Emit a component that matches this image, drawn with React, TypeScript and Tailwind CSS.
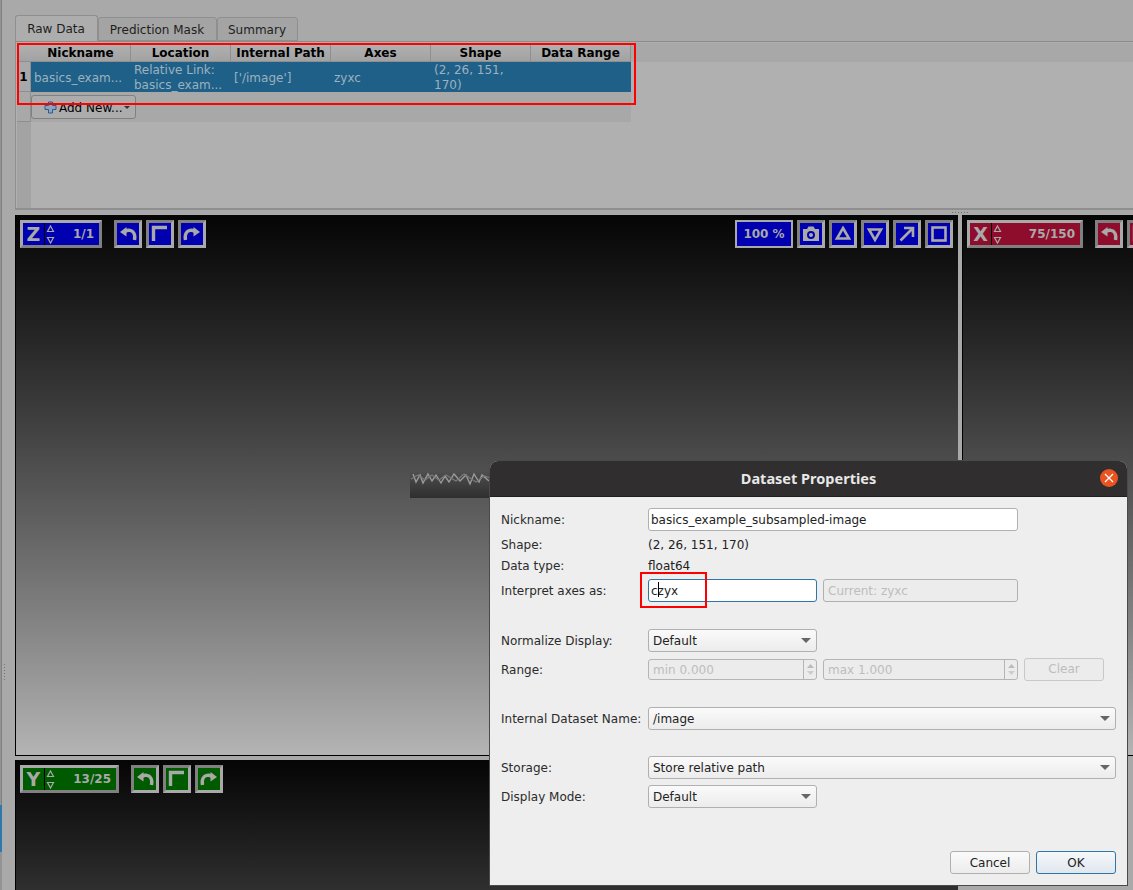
import React from "react";

const FONT = { fontFamily: '"DejaVu Sans", sans-serif' };

const columns = ["Nickname", "Location", "Internal Path", "Axes", "Shape", "Data Range"];

const Icon = ({ type }: { type: string }) => {
  const common = { fill: "none", stroke: "#a9a9a9", strokeWidth: 2.6 };
  return (
    <svg width="22" height="22" viewBox="0 0 22 22">
      {type === "undo" && (
        <>
          <path d="M8 8.5 C11 6.5 15 7 16.8 10 C18 12 18 14.5 17.5 17" {...common} strokeWidth={3.4} />
          <path d="M9.5 4 V13.5 L3 9 Z" fill="#a9a9a9" />
        </>
      )}
      {type === "redo" && (
        <>
          <path d="M14 8.5 C11 6.5 7 7 5.2 10 C4 12 4 14.5 4.5 17" {...common} strokeWidth={3.4} />
          <path d="M12.5 4 V13.5 L19 9 Z" fill="#a9a9a9" />
        </>
      )}
      {type === "corner" && <path d="M4.5 18 V4.5 H18" {...common} strokeWidth={3.4} />}
      {type === "camera" && (
        <>
          <path
            fillRule="evenodd"
            d="M3 6 H7 L8.5 3.5 H13.5 L15 6 H19 V18 H3 Z M11 8 A4 4 0 1 0 11 16 A4 4 0 1 0 11 8 Z"
            fill="#a9a9a9"
          />
          <circle cx="11" cy="12" r="2" fill="#a9a9a9" />
        </>
      )}
      {type === "up" && <path d="M11 5 L17 15.5 H5 Z" {...common} />}
      {type === "down" && <path d="M5 6.5 H17 L11 17 Z" {...common} />}
      {type === "diag" && (
        <>
          <path d="M4.5 17.5 L16 6" {...common} />
          <path d="M8 5 H17 V14" {...common} />
        </>
      )}
      {type === "square" && <rect x="4.5" y="4.5" width="13" height="13" {...common} />}
    </svg>
  );
};

const ToolButton = ({ type, bg }: { type: string; bg: string }) => (
  <div
    className={`w-[28px] h-[28px] border-[3px] border-t-[#808080] border-l-[#808080] border-r-[#a9a9a9] border-b-[#a9a9a9] ${bg}`}
  >
    <Icon type={type} />
  </div>
);

const Stepper = () => (
  <svg width="9" height="21" viewBox="0 0 9 21" className="shrink-0">
    <path d="M4.5 2 L7.5 7.5 H1.5 Z" fill="none" stroke="#a9a9a9" strokeWidth="1.2" />
    <path d="M1.5 13.5 H7.5 L4.5 19 Z" fill="none" stroke="#a9a9a9" strokeWidth="1.2" />
  </svg>
);

const AxisBox = ({ axis, value, width, bg }: { axis: string; value: string; width: string; bg: string }) => (
  <div
    className={`h-[28px] flex items-center border-[3px] border-t-[#a9a9a9] border-l-[#a9a9a9] border-r-[#808080] border-b-[#808080] ${width} ${bg}`}
  >
    <span className="w-[21px] h-full text-center text-[19px] leading-[22px] font-bold text-[#a9a9a9]">{axis}</span>
    <span className="w-px h-full bg-black" />
    <span className="ml-[1px]">
      <Stepper />
    </span>
    <span className="flex-1 text-right pr-[5px] text-[12px] font-bold text-[#a9a9a9]">{value}</span>
  </div>
);

const BlackBlue = "bg-[#0000b0]";

const Caret = () => (
  <svg width="10" height="5" viewBox="0 0 10 5">
    <path d="M0 0 H10 L5 5 Z" fill="#666" />
  </svg>
);

const Select = ({ label, width }: { label: string; width: string }) => (
  <div
    className={`h-[23px] flex items-center justify-between pl-[4px] pr-[5px] rounded-[3px] border border-[#b0b0b0] bg-gradient-to-b from-[#fafafa] to-[#ececec] text-[12px] text-[#222] ${width}`}
  >
    <span>{label}</span>
    <Caret />
  </div>
);

const SpinBox = ({ text, width }: { text: string; width: string }) => (
  <div className={`h-[21px] flex items-center rounded-[3px] border border-[#b5b5b5] bg-[#ececec] ${width}`}>
    <span className="flex-1 pl-[4px] text-[12px] text-[#bdbdbd]">{text}</span>
    <div className="w-[13px] h-full border-l border-[#b5b5b5] flex flex-col items-center justify-center gap-[3px]">
      <svg width="7" height="4" viewBox="0 0 7 4">
        <path d="M3.5 0 L7 4 H0 Z" fill="#bbb" />
      </svg>
      <svg width="7" height="4" viewBox="0 0 7 4">
        <path d="M0 0 H7 L3.5 4 Z" fill="#ccc" />
      </svg>
    </div>
  </div>
);

const FieldLabel = ({ children }: { children: React.ReactNode }) => (
  <span className="w-[147px] shrink-0 text-[12px] text-[#2b2b2b] whitespace-nowrap">{children}</span>
);

const Dialog = () => (
  <div className="absolute left-[490px] top-[461px] w-[637px] h-[424px] rounded-t-[8px] overflow-hidden bg-[#eeeeee] flex flex-col shadow-[0_0_0_1px_#4a4a4a]">
    <div className="h-[36px] shrink-0 relative bg-[#302e2e] flex items-center justify-center border-b border-[#1f1f1f]">
      <span className="text-[14.5px] font-bold text-[#e8e8e8]" style={{ fontFamily: '"Noto Sans", sans-serif' }}>
        Dataset Properties
      </span>
      <div className="absolute right-[9px] top-[8px] w-[18px] h-[18px] rounded-full bg-[#e95420] flex items-center justify-center">
        <svg width="10" height="10" viewBox="0 0 10 10">
          <path d="M1 1 L9 9 M9 1 L1 9" stroke="#fff" strokeWidth="1.2" />
        </svg>
      </div>
    </div>
    <div className="flex-1 pl-[11px] pt-[11px] pr-[11px] flex flex-col">
      <div className="flex items-center h-[23px]">
        <FieldLabel>Nickname:</FieldLabel>
        <div className="w-[370px] h-[23px] rounded-[3px] border border-[#b0b0b0] bg-white pl-[2px] text-[12px] leading-[23px] text-[#222]">
          basics_example_subsampled-image
        </div>
      </div>
      <div className="flex items-center h-[14px] mt-[7px]">
        <FieldLabel>Shape:</FieldLabel>
        <span className="text-[12px] text-[#222]">(2, 26, 151, 170)</span>
      </div>
      <div className="flex items-center h-[14px] mt-[7px]">
        <FieldLabel>Data type:</FieldLabel>
        <span className="text-[12px] text-[#222]">float64</span>
      </div>
      <div className="flex items-center h-[23px] mt-[6px]">
        <FieldLabel>Interpret axes as:</FieldLabel>
        <div className="w-[169px] h-[23px] rounded-[3px] border border-[#2f76a8] bg-white pl-[2px] text-[12px] leading-[23px] text-[#222]">
          c
          <span className="relative">
            <span className="absolute left-0 top-[-2px] w-px h-[15px] bg-black" />
          </span>
          zyx
        </div>
        <div className="ml-[6px] w-[195px] h-[23px] rounded-[3px] border border-[#b0b0b0] bg-[#ececec] pl-[4px] text-[12px] leading-[23px] text-[#bdbdbd]">
          Current: zyxc
        </div>
      </div>
      <div className="flex items-center h-[23px] mt-[27px]">
        <FieldLabel>Normalize Display:</FieldLabel>
        <Select label="Default" width="w-[169px]" />
      </div>
      <div className="flex items-center h-[23px] mt-[6px]">
        <FieldLabel>Range:</FieldLabel>
        <SpinBox text="min 0.000" width="w-[169px]" />
        <div className="ml-[6px]">
          <SpinBox text="max 1.000" width="w-[195px]" />
        </div>
        <div className="ml-[6px] w-[80px] h-[23px] rounded-[3px] border border-[#c8c8c8] bg-[#ececec] text-center text-[12px] leading-[21px] text-[#bdbdbd]">
          Clear
        </div>
      </div>
      <div className="flex items-center h-[23px] mt-[26px]">
        <FieldLabel>Internal Dataset Name:</FieldLabel>
        <Select label="/image" width="w-[468px]" />
      </div>
      <div className="flex items-center h-[23px] mt-[26px]">
        <FieldLabel>Storage:</FieldLabel>
        <Select label="Store relative path" width="w-[468px]" />
      </div>
      <div className="flex items-center h-[23px] mt-[6px]">
        <FieldLabel>Display Mode:</FieldLabel>
        <Select label="Default" width="w-[169px]" />
      </div>
      <div className="flex justify-end gap-[6px] mt-[43px]">
        <div className="w-[80px] h-[23px] rounded-[3px] border border-[#b0b0b0] bg-gradient-to-b from-[#fafafa] to-[#ececec] text-center text-[12px] leading-[23px] text-[#222]">
          Cancel
        </div>
        <div className="w-[80px] h-[23px] rounded-[3px] border border-[#2f76a8] bg-gradient-to-b from-[#f6f8fa] to-[#dfe7ee] text-center text-[12px] leading-[23px] text-[#222]">
          OK
        </div>
      </div>
    </div>
  </div>
);

const Table = () => (
  <div className="h-[169px] border-t border-[#8a8a8a] border-b-2 border-b-[#8f8f8f] border-l border-l-[#8f8f8f] pl-px pt-px bg-[#b0b0b0]">
    <div className="flex h-[19px] bg-[#a8a8a8]">
      <div className="w-[14px] h-full bg-gradient-to-b from-[#b2b2b2] to-[#a2a2a2] border-b border-[#8f8f8f]" />
      {columns.map((c) => (
        <div
          key={c}
          className="w-[100px] h-full bg-gradient-to-b from-[#b2b2b2] to-[#a2a2a2] border-r border-b border-[#8f8f8f] text-center text-[12px] leading-[21px] font-bold text-black whitespace-nowrap"
        >
          {c}
        </div>
      ))}
    </div>
    <div className="flex h-[30px]">
      <div className="w-[14px] bg-[#a8a8a8] border-r border-b border-[#8f8f8f] text-center text-[12px] leading-[31px] font-bold text-black">
        1
      </div>
      <div className="w-[600px] flex bg-[#1f6088] text-[12px] leading-[15px] text-[#9db1bf]">
        <div className="w-[100px] px-[3px] mt-[2px] self-center whitespace-nowrap">basics_exam...</div>
        <div className="w-[100px] px-[3px] mt-[2px] self-center whitespace-nowrap">
          Relative Link:
          <br />
          basics_exam...
        </div>
        <div className="w-[100px] px-[3px] mt-[2px] self-center">['/image']</div>
        <div className="w-[100px] px-[3px] mt-[2px] self-center">zyxc</div>
        <div className="w-[100px] px-[3px] mt-[2px] self-center">
          (2, 26, 151,
          <br />
          170)
        </div>
        <div className="w-[100px]" />
      </div>
    </div>
    <div className="flex h-[30px]">
      <div className="w-[14px] bg-[#a8a8a8] border-r border-b border-[#8f8f8f]" />
      <div className="w-[600px] bg-[#a8a8a8] pt-[3px]">
        <div className="w-[105px] h-[24px] rounded-[3px] border border-[#808080] bg-[#acacac] flex items-center pl-[12px] text-[12px] text-black">
          <svg width="13" height="13" viewBox="0 0 13 13" className="shrink-0">
            <path d="M4.5 1 H8.5 V4.5 H12 V8.5 H8.5 V12 H4.5 V8.5 H1 V4.5 H4.5 Z" fill="#8aa5c0" stroke="#2b5c8a" />
          </svg>
          <span className="ml-[2px] mt-[2px]">Add New...</span>
          <svg width="6" height="3" viewBox="0 0 6 3" className="ml-[1px] shrink-0">
            <path d="M0 0 H6 L3 3 Z" fill="#333" />
          </svg>
        </div>
      </div>
    </div>
    <div className="w-[14px] h-[86px] bg-[#a3a3a3]" />
  </div>
);

const Tabs = () => (
  <div className="h-[26px] flex items-end text-[12px] text-[#1e1e1e]">
    <div className="w-[83px] h-[26px] rounded-t-[3px] border border-b-0 border-[#8f8f8f] bg-[#adadad] text-center leading-[27px] pr-[1px]">
      Raw Data
    </div>
    <div className="w-[119px] h-[24px] rounded-t-[3px] border border-[#8f8f8f] bg-[#a4a4a4] text-center leading-[25px] pr-[1px]">
      Prediction Mask
    </div>
    <div className="w-[81px] h-[24px] rounded-t-[3px] border border-[#8f8f8f] bg-[#a4a4a4] text-center leading-[25px] pr-[1px]">
      Summary
    </div>
  </div>
);

const SliceImage = () => (
  <div className="absolute left-[394px] top-[257px] w-[80px] h-[26px] bg-gradient-to-b from-[#4e4e4e] via-[#3e3e3e] to-[#2f2f2f]">
    <svg width="80" height="26" viewBox="0 0 80 26">
      <path
        d="M3 2 L6 10 L10 3 L13 11 L18 2 L22 9 L26 3 L31 11 L35 4 L39 10 L44 2 L50 9 L56 3 L60 12 L64 2 L69 10 L72 3 L79 9"
        fill="none"
        stroke="#9a9a9a"
        strokeWidth="1.4"
      />
      <path
        d="M1 7 L8 3 L15 8 L22 3 L29 8 L36 3 L46 9 L54 2 L66 10 L74 4 L80 6"
        fill="none"
        stroke="#7a7a7a"
        strokeWidth="1.2"
      />
    </svg>
  </div>
);

const SplitterDots = ({ className }: { className: string }) => (
  <div className={`flex gap-[2px] ${className}`}>
    {[0, 1, 2, 3, 4, 5].map((d) => (
      <span key={d} className="w-px h-px bg-[#6f6f6f]" />
    ))}
  </div>
);

export default function App() {
  return (
    <div className="relative w-[1133px] h-[890px] overflow-hidden flex bg-[#a9a9a9]" style={FONT}>
      <div className="w-[15px] shrink-0 flex">
        <div className="w-[2px] flex flex-col bg-[#939393]">
          <div className="h-[805px] border-r border-[#808080]" />
          <div className="h-[47px] bg-[#2f78ae]" />
        </div>
        <SplitterDots className="flex-col ml-[2px] mt-[664px]" />
      </div>

      <div className="flex-1 min-w-0 flex flex-col pt-[15px]">
        <Tabs />
        <Table />
        <div className="h-[5px] flex items-center justify-end pr-[165px]">
          <SplitterDots className="" />
        </div>

        <div className="flex gap-[4px] h-[541px]">
          <div className="relative w-[943px] border-b border-l border-black bg-gradient-to-b from-[#060606] to-[#b4b4b4]">
            <SliceImage />
            <div className="flex items-start pt-[5px] pl-[4px]">
              <AxisBox axis="Z" value="1/1" width="w-[82px]" bg={BlackBlue} />
              <div className="ml-[12px] flex gap-[4px]">
                <ToolButton type="undo" bg={BlackBlue} />
                <ToolButton type="corner" bg={BlackBlue} />
                <ToolButton type="redo" bg={BlackBlue} />
              </div>
              <div className="ml-auto mr-[5px] flex gap-[4px]">
                <div className="w-[58px] h-[28px] border-2 border-[#a9a9a9] bg-[#0000b0] text-center text-[12px] leading-[24px] font-bold text-[#a9a9a9]">
                  100 %
                </div>
                <ToolButton type="camera" bg={BlackBlue} />
                <ToolButton type="up" bg={BlackBlue} />
                <ToolButton type="down" bg={BlackBlue} />
                <ToolButton type="diag" bg={BlackBlue} />
                <ToolButton type="square" bg={BlackBlue} />
              </div>
            </div>
          </div>
          <div className="flex-1 min-w-0 border-b border-l border-black bg-gradient-to-b from-[#060606] to-[#b4b4b4] overflow-hidden">
            <div className="flex items-start pt-[5px] pl-[4px] w-[260px]">
              <AxisBox axis="X" value="75/150" width="w-[116px]" bg="bg-[#8f0d2c]" />
              <div className="ml-[12px] flex gap-[4px]">
                <ToolButton type="undo" bg="bg-[#8f0d2c]" />
                <ToolButton type="corner" bg="bg-[#8f0d2c]" />
              </div>
            </div>
          </div>
        </div>

        <div className="mt-[4px] h-[130px] flex">
          <div className="w-[943px] border-l border-black bg-gradient-to-b from-[#060606] to-[#2f2f2f]">
            <div className="flex items-start pt-[5px] pl-[4px]">
              <AxisBox axis="Y" value="13/25" width="w-[99px]" bg="bg-[#005a00]" />
              <div className="ml-[12px] flex gap-[4px]">
                <ToolButton type="undo" bg="bg-[#005a00]" />
                <ToolButton type="corner" bg="bg-[#005a00]" />
                <ToolButton type="redo" bg="bg-[#005a00]" />
              </div>
            </div>
          </div>
        </div>
      </div>

      <Dialog />

      <div className="absolute left-[17px] top-[43px] w-[619px] h-[62px] border-2 border-[#ff0000]" />
      <div className="absolute left-[640px] top-[572px] w-[67px] h-[36px] border-2 border-[#ff0000]" />
    </div>
  );
}
